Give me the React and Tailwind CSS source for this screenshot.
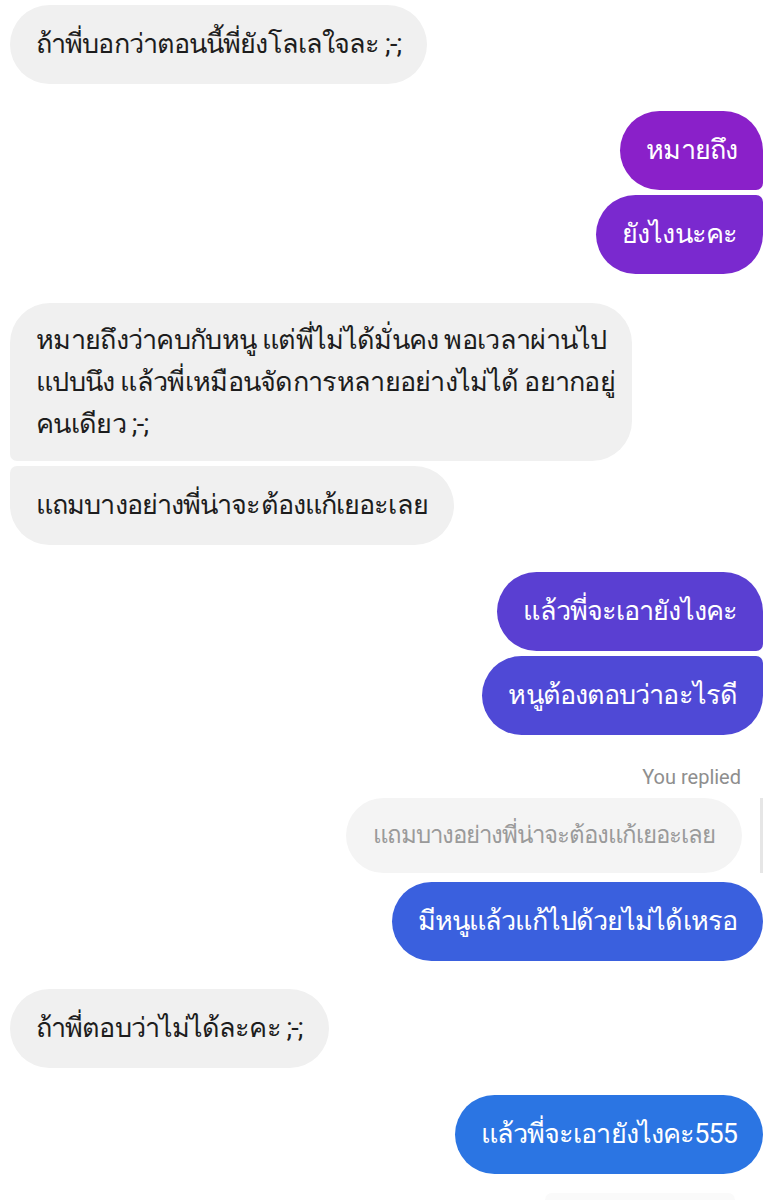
import React from "react";

const font = { fontFamily: "Roboto, 'Noto Sans', sans-serif" };

const Bubble = ({ children, className }) => (
  <div
    className={`px-[26px] py-[19px] text-[27px] leading-[41px] tracking-[-0.9px] whitespace-nowrap ${className}`}
  >
    {children}
  </div>
);

export default function App() {
  return (
    <div
      className="w-[781px] h-[1200px] overflow-hidden bg-white flex flex-col pl-[10px] pr-[18px] pt-[5px]"
      style={font}
    >
      {/* them */}
      <Bubble className="self-start bg-[#f0f0f0] text-[#1d1d1d] rounded-[40px]">
        ถ้าพี่บอกว่าตอนนี้พี่ยังโลเลใจละ ;-;
      </Bubble>

      {/* me */}
      <div className="flex flex-col items-end gap-[5px] mt-[27px]">
        <Bubble className="bg-[#8a20c9] text-white rounded-l-[40px] rounded-tr-[40px] rounded-br-[7px]">
          หมายถึง
        </Bubble>
        <Bubble className="bg-[#7a29cf] text-white rounded-l-[40px] rounded-tr-[7px] rounded-br-[40px]">
          ยังไงนะคะ
        </Bubble>
      </div>

      {/* them */}
      <div className="flex flex-col items-start gap-[5px] mt-[29px]">
        <div className="w-[622px] px-[26px] py-[16px] text-[27px] leading-[42px] tracking-[-0.7px] whitespace-nowrap bg-[#f0f0f0] text-[#1d1d1d] rounded-r-[40px] rounded-tl-[40px] rounded-bl-[7px]">
          หมายถึงว่าคบกับหนู แต่พี่ไม่ได้มั่นคง พอเวลาผ่านไป
          <br />
          แปบนึง แล้วพี่เหมือนจัดการหลายอย่างไม่ได้ อยากอยู่
          <br />
          คนเดียว ;-;
        </div>
        <Bubble className="bg-[#f0f0f0] text-[#1d1d1d] rounded-r-[40px] rounded-tl-[7px] rounded-bl-[40px]">
          แถมบางอย่างพี่น่าจะต้องแก้เยอะเลย
        </Bubble>
      </div>

      {/* me */}
      <div className="flex flex-col items-end gap-[5px] mt-[27px]">
        <Bubble className="bg-[#5a3fd2] text-white rounded-l-[40px] rounded-tr-[40px] rounded-br-[7px]">
          แล้วพี่จะเอายังไงคะ
        </Bubble>
        <Bubble className="bg-[#4f49d6] text-white rounded-l-[40px] rounded-tr-[7px] rounded-br-[40px]">
          หนูต้องตอบว่าอะไรดี
        </Bubble>
      </div>

      {/* reply */}
      <div className="flex flex-col items-end mt-[30px]">
        <div className="pr-[22px] text-[20px] leading-[24px] text-[#8e8e8e]">
          You replied
        </div>
        <div className="flex items-stretch gap-[18px] mt-[9px]">
          <div className="bg-[#f4f4f4] text-[#9a9a9a] text-[24px] leading-[35px] tracking-[-1px] whitespace-nowrap px-[27px] py-[20px] rounded-[38px]">
            แถมบางอย่างพี่น่าจะต้องแก้เยอะเลย
          </div>
          <div className="w-[3px] bg-[#e6e6e6]" />
        </div>
        <Bubble className="mt-[9px] bg-[#3a60de] text-white rounded-[40px]">
          มีหนูแล้วแก้ไปด้วยไม่ได้เหรอ
        </Bubble>
      </div>

      {/* them */}
      <Bubble className="self-start mt-[28px] bg-[#f0f0f0] text-[#1d1d1d] rounded-[40px]">
        ถ้าพี่ตอบว่าไม่ได้ละคะ ;-;
      </Bubble>

      {/* me */}
      <Bubble className="self-end mt-[27px] bg-[#2b75e3] text-white rounded-[40px]">
        แล้วพี่จะเอายังไงคะ555
      </Bubble>

      <div className="self-end mt-[19px] mr-[28px] w-[190px] h-[20px] rounded-t-[20px] bg-[#fafafa]" />
    </div>
  );
}
